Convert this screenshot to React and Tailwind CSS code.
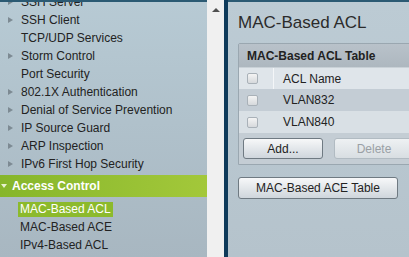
import React from "react";

const navItems = [
  { label: "SSH Server", arrow: true },
  { label: "SSH Client", arrow: true },
  { label: "TCP/UDP Services", arrow: false },
  { label: "Storm Control", arrow: true },
  { label: "Port Security", arrow: false },
  { label: "802.1X Authentication", arrow: true },
  { label: "Denial of Service Prevention", arrow: true },
  { label: "IP Source Guard", arrow: true },
  { label: "ARP Inspection", arrow: true },
  { label: "IPv6 First Hop Security", arrow: true },
];

const subItems = ["MAC-Based ACL", "MAC-Based ACE", "IPv4-Based ACL"];

const rows = [
  { name: "VLAN832", bg: "bg-[#c4cdd5]" },
  { name: "VLAN840", bg: "bg-[#d9e0e5]" },
];

const Checkbox = () => (
  <div className="w-[11px] h-[11px] rounded-[2px] border border-[#a9b1b8] bg-gradient-to-b from-[#f4f4f4] to-[#d6d9dc]" />
);

const App = () => {
  return (
    <div className="w-[409px] h-[257px] overflow-hidden flex font-['Liberation_Sans',Arial,sans-serif] text-[12px] text-[#222]">
      {/* Left nav */}
      <div className="w-[207px] h-full border-t-2 border-[#2b5a73] bg-gradient-to-b from-[#b7cad4] to-[#a8b7c1] overflow-hidden">
        <div className="-mt-[9px]">
          {navItems.map((item) => (
            <div key={item.label} className="h-[18px] flex items-center">
              <div className="w-[21px] flex justify-start pl-[8px]">
                {item.arrow && (
                  <div className="w-0 h-0 border-y-[3.5px] border-y-transparent border-l-[5px] border-l-[#7d8a93]" />
                )}
              </div>
              <span>{item.label}</span>
            </div>
          ))}
          <div className="mt-[2px] h-[22px] flex items-center bg-gradient-to-r from-[#86b62b] to-[#a3c83a] text-white font-bold">
            <div className="w-[12px] flex pl-[1px]">
              <div className="w-0 h-0 border-x-[3px] border-x-transparent border-t-[4px] border-t-[#e8f2d0]" />
            </div>
            <span>Access Control</span>
          </div>
          <div className="mt-[3px]">
            {subItems.map((s, i) => (
              <div key={s} className="h-[18px] flex items-center pl-[18px]">
                <span
                  className={
                    i === 0
                      ? "bg-[#8cba2c] text-white px-[2px] leading-[15px]"
                      : "px-[2px] leading-[15px]"
                  }
                >
                  {s}
                </span>
              </div>
            ))}
          </div>
        </div>
      </div>

      {/* Scrollbar */}
      <div className="w-[17px] h-full bg-[#f0f0f0] flex justify-center pt-[8px]">
        <div className="w-0 h-0 border-x-[4px] border-x-transparent border-b-[4px] border-b-[#505050]" />
      </div>
      <div className="w-[4px] h-full bg-[#0e3a5a]" />

      {/* Content */}
      <div className="flex-1 h-full border-t-2 border-[#2b5a73] bg-gradient-to-b from-[#bccbd4] to-[#b5c3cc] pl-[10px] pt-[11px] overflow-hidden">
        <div className="text-[17px] leading-[20px] text-[#2b2b2b] whitespace-nowrap">MAC-Based ACL</div>
        <div className="mt-[10px] w-[200px] border border-[#9aa7b0] bg-[#c4cdd4] rounded-tl-[2px]">
          <div className="h-[23px] flex items-center pl-[8px] bg-gradient-to-b from-[#b9c2ca] to-[#adb7bf] font-bold whitespace-nowrap">
            MAC-Based ACL Table
          </div>
          <div className="h-[22px] flex items-center bg-[#dfe5ea] border-t border-[#c9d1d7]">
            <div className="w-[35px] h-full flex items-center pl-[8px] border-r border-[#f4f6f8]">
              <Checkbox />
            </div>
            <span className="pl-[9px]">ACL Name</span>
          </div>
          {rows.map((r) => (
            <div key={r.name} className={`h-[22px] flex items-center ${r.bg}`}>
              <div className="w-[36px] flex items-center pl-[8px]">
                <Checkbox />
              </div>
              <span className="pl-[8px]">{r.name}</span>
            </div>
          ))}
          <div className="h-[31px] flex items-center gap-[11px] pl-[4px] bg-[#c4cdd4]">
            <button className="w-[80px] h-[21px] rounded-[3px] border border-[#6f7a82] bg-gradient-to-b from-[#f7f8f9] to-[#cfd6dc] text-[#222]">
              Add...
            </button>
            <button className="w-[80px] h-[21px] rounded-[3px] border border-[#b1bbc2] bg-gradient-to-b from-[#eef1f3] to-[#d8dee2] text-[#9aa0a5]">
              Delete
            </button>
          </div>
        </div>
        <button className="mt-[12px] w-[160px] h-[22px] rounded-[3px] border border-[#6f7a82] bg-gradient-to-b from-[#f7f8f9] to-[#cfd6dc] text-[#222] whitespace-nowrap">
          MAC-Based ACE Table
        </button>
      </div>
    </div>
  );
};

export default App;
